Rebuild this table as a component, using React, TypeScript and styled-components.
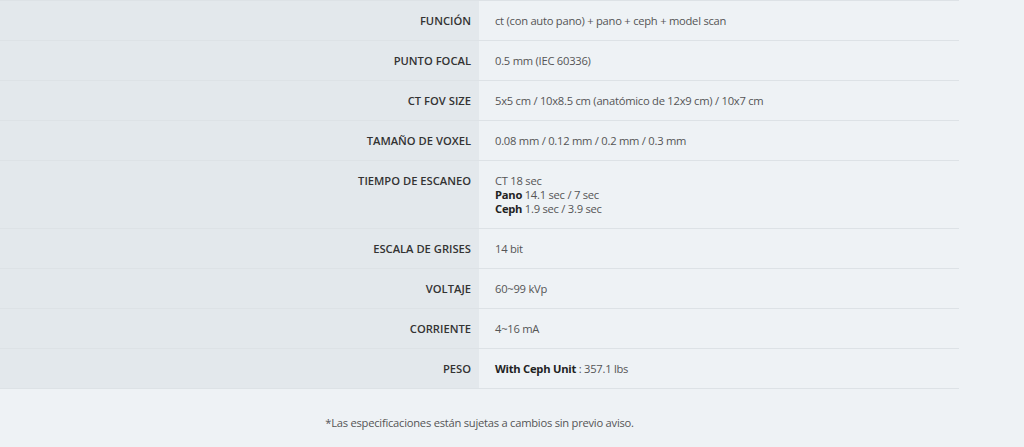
import styled, { createGlobalStyle } from 'styled-components';

const GlobalStyle = createGlobalStyle`
  html, body {
    margin: 0;
    padding: 0;
    background: #eef2f5;
  }
  body {
    font-family: 'Open Sans', 'Noto Sans', sans-serif;
    font-size: 11px;
    color: #555;
  }
`;

const Page = styled.div`
  width: 959px;
`;

const SpecTable = styled.table`
  width: 100%;
  border-collapse: collapse;
  border-top: 1px solid #dde2e6;
`;

const Row = styled.tr`
  border-bottom: 1px solid #dde2e6;
`;

const Label = styled.th`
  width: 479px;
  box-sizing: border-box;
  background: #e3e8ec;
  color: #333;
  font-weight: 600;
  font-size: 11.2px;
  text-transform: uppercase;
  text-align: right;
  vertical-align: top;
  padding: 13px 8px 12px 0;
  line-height: 14px;
`;

const Value = styled.td`
  background: #eef2f5;
  vertical-align: top;
  padding: 13px 0 12px 16px;
  line-height: 14px;
  font-size: 11.2px;
  letter-spacing: -0.25px;
  b {
    font-weight: 700;
    color: #222;
  }
`;

const Note = styled.p`
  margin: 27px 0 0;
  text-align: center;
  line-height: 14px;
  font-size: 11.2px;
  letter-spacing: -0.25px;
`;

const specs: { label: string; value: React.ReactNode }[] = [
  { label: 'Función', value: 'ct (con auto pano) + pano + ceph + model scan' },
  { label: 'Punto focal', value: '0.5 mm (IEC 60336)' },
  { label: 'CT FOV size', value: '5x5 cm / 10x8.5 cm (anatómico de 12x9 cm) / 10x7 cm' },
  { label: 'Tamaño de voxel', value: '0.08 mm / 0.12 mm / 0.2 mm / 0.3 mm' },
  {
    label: 'Tiempo de escaneo',
    value: (
      <>
        CT 18 sec
        <br />
        <b>Pano</b> 14.1 sec / 7 sec
        <br />
        <b>Ceph</b> 1.9 sec / 3.9 sec
      </>
    ),
  },
  { label: 'Escala de grises', value: '14 bit' },
  { label: 'Voltaje', value: '60~99 kVp' },
  { label: 'Corriente', value: '4~16 mA' },
  {
    label: 'Peso',
    value: (
      <>
        <b>With Ceph Unit</b> : 357.1 lbs
      </>
    ),
  },
];

export default function App() {
  return (
    <Page>
      <GlobalStyle />
      <SpecTable>
        <tbody>
          {specs.map((s) => (
            <Row key={s.label}>
              <Label>{s.label}</Label>
              <Value>{s.value}</Value>
            </Row>
          ))}
        </tbody>
      </SpecTable>
      <Note>*Las especificaciones están sujetas a cambios sin previo aviso.</Note>
    </Page>
  );
}
